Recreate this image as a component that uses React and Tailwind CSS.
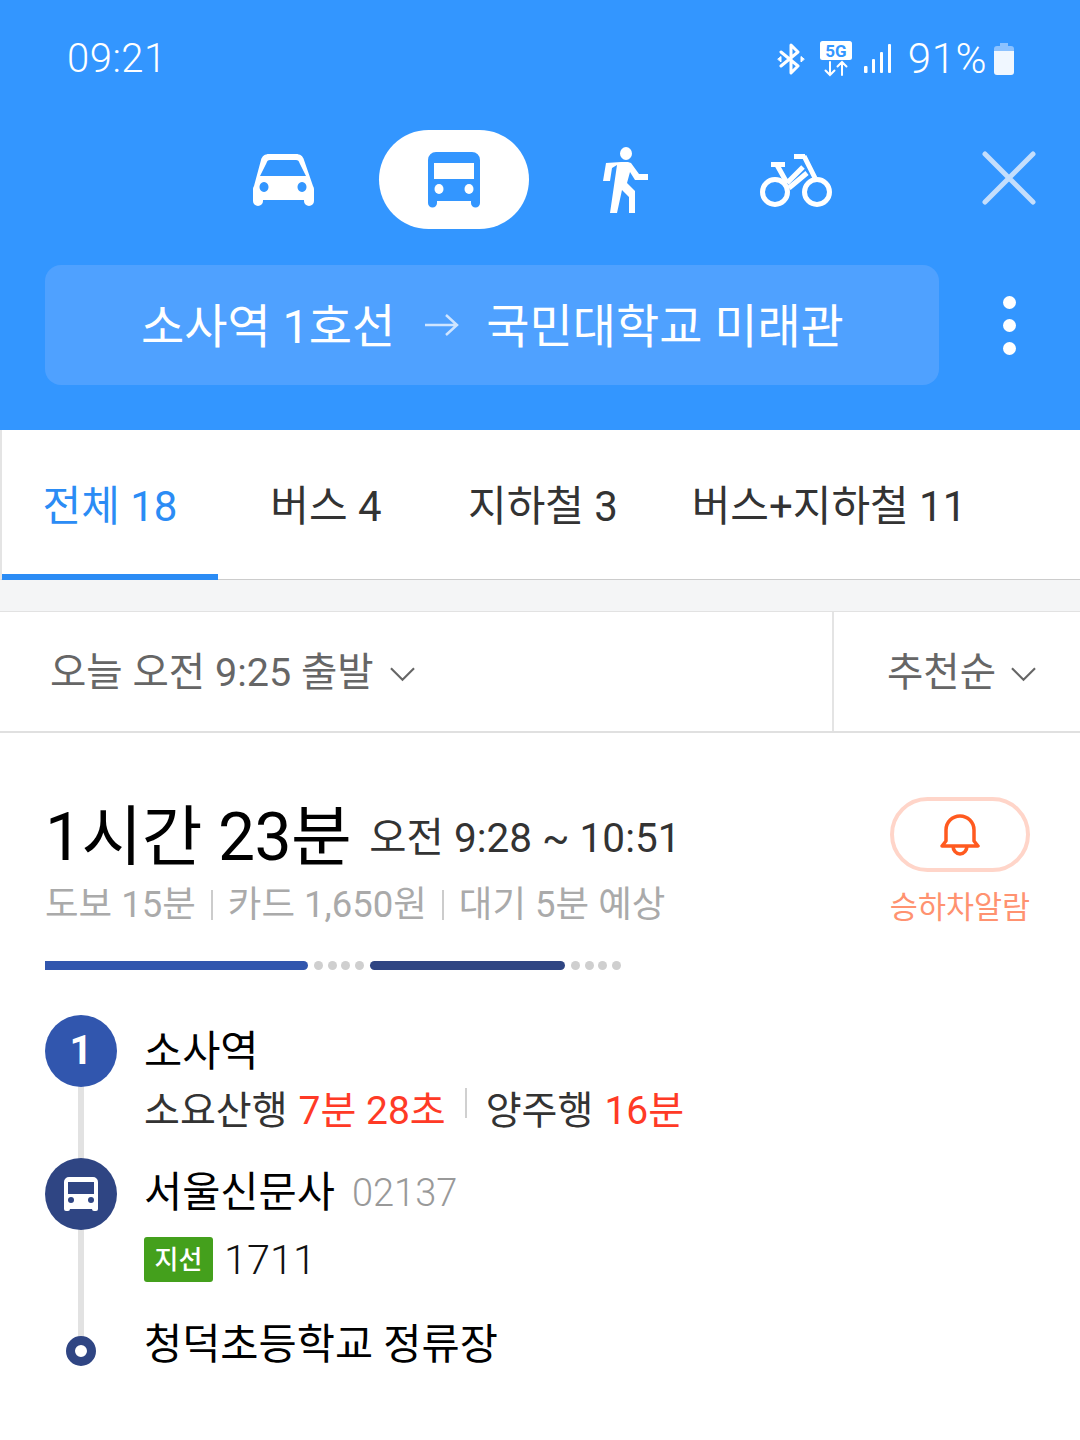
import React from 'react';

const font = { fontFamily: 'Roboto, "Noto Sans CJK KR", sans-serif' };

function BusGlyph({ className, fill = '#fff', cut = '#3396ff' }) {
  return (
    <svg viewBox="0 0 52 56" className={className}>
      <path d="M8 0h36a8 8 0 0 1 8 8v43a4.500 4.500 0 0 1-9 0v-2H9v2a4.500 4.500 0 0 1-9 0V8a8 8 0 0 1 8-8z" fill={fill} />
      <rect x="6" y="11" width="40" height="16" fill={cut} />
      <ellipse cx="11" cy="37" rx="4.500" ry="5" fill={cut} />
      <ellipse cx="41" cy="37" rx="4.500" ry="5" fill={cut} />
    </svg>
  );
}

function Chevron({ className }) {
  return (
    <svg viewBox="0 0 26 16" className={className} fill="none" stroke="#666" strokeWidth="2.200">
      <path d="M1 2l12 12L25 2" />
    </svg>
  );
}

function StatusIcons() {
  return (
    <div className="flex items-center">
      <svg viewBox="0 0 28 32" className="w-[28px] h-[32px] mr-[15px]" fill="none" stroke="#fff" strokeWidth="3" strokeLinejoin="round" strokeLinecap="round">
        <path d="M4 9l17 14-7 7V2l7 7L4 23" />
        <path d="M1 16l3-2.500v5zM27 16l-3-2.500v5z" fill="#fff" strokeWidth="1" />
      </svg>
      <svg viewBox="0 0 32 36" className="w-[32px] h-[36px] mr-[12px]">
        <rect x="0" y="0" width="32" height="19" rx="2.500" fill="#fff" />
        <text x="16" y="16" textAnchor="middle" fontSize="17" fontWeight="700" fill="#3396ff" fontFamily="Roboto">5G</text>
        <path d="M10 21v13M5.500 29.500L10 34l4.500-4.500M22 34V21M17.500 25.500L22 21l4.500 4.500" fill="none" stroke="#fff" strokeWidth="2" strokeLinecap="round" />
      </svg>
      <svg viewBox="0 0 28 30" className="w-[28px] h-[30px] mr-[16px]">
        <rect x="0" y="22" width="3.500" height="7" rx="1" fill="#fff" />
        <rect x="8" y="15" width="3" height="14" rx="1" fill="#fff" />
        <rect x="16" y="8" width="3" height="21" rx="1" fill="#fff" />
        <rect x="24" y="0" width="3" height="29" rx="1" fill="#fff" />
      </svg>
      <span className="text-[42px] leading-none font-light text-white tracking-[0.5px]">91%</span>
      <svg viewBox="0 0 20 32" className="w-[20px] h-[32px] ml-[7px]">
        <path d="M6 0h8v4H6z" fill="#8cc2ff" />
        <rect x="0" y="3" width="20" height="7" rx="3" fill="#8cc2ff" />
        <path d="M0 8h20v21a3 3 0 0 1-3 3H3a3 3 0 0 1-3-3z" fill="#f0f7ff" />
      </svg>
    </div>
  );
}

function TransportTabs() {
  return (
    <div className="flex items-center h-[99px] mt-[50px] relative">
      <div className="w-[252px] shrink-0" />
      <svg viewBox="0 0 62 52" className="w-[62px] h-[52px] shrink-0">
        <path fillRule="evenodd" fill="#fff" d="M17 0h27c4 0 7 2 8 6l9 26c.6 1 1 2 1 3v12a5 5 0 0 1-10 0v-1H11v1a5 5 0 0 1-10 0V35c0-1 .3-2 1-3L9 6c1-4 4-6 8-6zm1 6c-2 0-3 1-3.500 3L8 22h46l-6.500-13c-.5-2-1.500-3-3.500-3zM12 28a4.500 5 0 1 0 .01 0zM50 28a4.500 5 0 1 0 .01 0z" />
      </svg>
      <div className="ml-[65px] w-[150px] h-[99px] bg-white rounded-[50px] flex items-center justify-center shrink-0">
        <BusGlyph className="w-[52px] h-[56px]" fill="#3396ff" cut="#fff" />
      </div>
      <svg viewBox="0 0 46 66" className="ml-[73px] w-[46px] h-[66px] shrink-0" fill="#fff">
        <ellipse cx="24" cy="6.500" rx="6" ry="6.500" />
        <path d="M19 15l7 0 3 1 8 11h9v6H33l-5-8-3 11 8 8v22h-6V50l-7-7-5 23H8l7-48-5 3-2 13H1l3-18z" />
      </svg>
      <svg viewBox="0 0 72 54" className="ml-[112px] w-[72px] h-[54px] shrink-0" fill="none" stroke="#fff" strokeWidth="5">
        <circle cx="15" cy="39" r="12.500" />
        <circle cx="57" cy="39" r="12.500" />
        <path d="M11 11.500h14M17 12l10 18M34 3.500h11M44 3l11 22M27 30l16-16M29 35l18-15" />
      </svg>
      <svg viewBox="0 0 54 54" className="absolute left-[982px] top-[21px] w-[54px] h-[54px]" stroke="#c4defc" strokeWidth="5" strokeLinecap="round">
        <path d="M3 3l48 48M51 3L3 51" />
      </svg>
    </div>
  );
}

function TabItem({ label, active, className }) {
  return (
    <div className={`h-[150px] flex items-center justify-center ${className} ${active ? 'text-[#2b8cf5] border-b-[6px] border-[#2b8cf5] pt-[10px]' : 'text-[#333] pt-[4px]'}`}>
      <span className="text-[42px] leading-none whitespace-nowrap">{label}</span>
    </div>
  );
}

function Timeline() {
  return (
    <div className="relative mt-[45px] ml-[45px]">
      <div className="absolute left-[33px] top-[60px] w-[6px] h-[280px] bg-[#e2e2e2]" />

      <div className="flex h-[143px] relative">
        <div className="w-[72px] h-[72px] rounded-full bg-[#3156ae] flex items-center justify-center text-white text-[40px] font-bold leading-none shrink-0">1</div>
        <div className="ml-[27px] pt-[3px]">
          <div className="text-[41.500px] leading-[68px] text-black">소사역</div>
          <div className="flex items-center text-[39px] leading-[54px] mt-[-2px] text-[#333]">
            <span>소요산행</span>
            <span className="ml-[11px] text-[#ff3a26]">7분 28초</span>
            <span className="w-[2px] h-[30px] bg-[#d0d0d0] ml-[19px] mr-[19px] mt-[-16px]" />
            <span>양주행</span>
            <span className="ml-[11px] text-[#ff3a26]">16분</span>
          </div>
        </div>
      </div>

      <div className="flex h-[150px] relative">
        <div className="w-[72px] h-[72px] rounded-full bg-[#2f4583] flex items-center justify-center shrink-0">
          <svg viewBox="0 0 34 34" className="w-[34px] h-[34px]">
            <path d="M5 0h24a5 5 0 0 1 5 5v27a2 2 0 0 1-2 2h-2a2 2 0 0 1-2-2H6a2 2 0 0 1-2 2H2a2 2 0 0 1-2-2V5a5 5 0 0 1 5-5z" fill="#fff" />
            <rect x="4" y="5" width="26" height="12" fill="#2f4583" />
            <circle cx="7" cy="23" r="3" fill="#2f4583" />
            <circle cx="27" cy="23" r="3" fill="#2f4583" />
          </svg>
        </div>
        <div className="ml-[27px]">
          <div className="flex items-center h-[68px] pt-[1px]">
            <span className="text-[41.500px] text-black leading-none">서울신문사</span>
            <span className="ml-[17px] text-[38px] font-light text-[#999] leading-none">02137</span>
          </div>
          <div className="flex items-center mt-[11px]">
            <span className="w-[69px] h-[45px] rounded-[3px] bg-[#44a01c] text-white text-[26px] font-medium flex items-center justify-center leading-none">지선</span>
            <span className="ml-[11px] text-[41.500px] font-light text-[#111] leading-none">1711</span>
          </div>
        </div>
      </div>

      <div className="flex items-center relative">
        <div className="w-[72px] flex justify-center shrink-0">
          <div className="w-[30px] h-[30px] rounded-full border-[9px] border-[#2f4583] bg-white mt-[14px]" />
        </div>
        <div className="ml-[27px] text-[41.500px] text-black leading-[68px] mt-[3px]">청덕초등학교 정류장</div>
      </div>
    </div>
  );
}

export default function App() {
  return (
    <div className="w-[1080px] h-[1440px] bg-white overflow-hidden" style={font}>
      <header className="h-[430px] bg-[#3396ff] relative">
        <div className="flex items-center justify-between pl-[67px] pr-[66px] pt-[38px] h-[80px]">
          <span className="text-[40px] font-light text-white leading-none tracking-[0.5px]">09:21</span>
          <StatusIcons />
        </div>
        <TransportTabs />
        <div className="flex items-center mt-[36px]">
          <div className="ml-[45px] w-[894px] h-[120px] rounded-[16px] bg-[#4fa1ff] flex items-center pl-[96px] pt-[3px] text-white text-[47px] leading-none">
            <span>소사역 1호선</span>
            <svg viewBox="0 0 34 24" className="w-[34px] h-[24px] ml-[30px] mr-[27px] mt-[-3px]" fill="none" stroke="#cfe5ff" strokeWidth="2.500">
              <path d="M0 12h32M21 2l11 10-11 10" />
            </svg>
            <span>국민대학교 미래관</span>
          </div>
          <div className="ml-[64px] flex flex-col gap-[10px]">
            <div className="w-[13px] h-[13px] rounded-full bg-white" />
            <div className="w-[13px] h-[13px] rounded-full bg-white" />
            <div className="w-[13px] h-[13px] rounded-full bg-white" />
          </div>
        </div>
      </header>

      <nav className="flex h-[150px] border-b border-[#ccc] border-l-2 border-l-[#e4e4e4]">
        <TabItem label="전체 18" active className="w-[216px]" />
        <TabItem label="버스 4" className="w-[216px]" />
        <TabItem label="지하철 3" className="w-[218px]" />
        <TabItem label="버스+지하철 11" className="w-[354px]" />
      </nav>

      <div className="h-[32px] bg-[#f4f5f6] border-b border-[#e2e2e2]" />

      <div className="flex h-[121px] border-b-2 border-[#e0e0e0] text-[#666] text-[39.500px]">
        <div className="w-[834px] border-r-2 border-[#e4e4e4] flex items-center pl-[50px] pt-[3px]">
          <span className="leading-none">오늘 오전 9:25 출발</span>
          <Chevron className="w-[25px] h-[16px] ml-[16px] mt-[2px]" />
        </div>
        <div className="flex-1 flex items-center pl-[53px] pt-[3px]">
          <span className="leading-none">추천순</span>
          <Chevron className="w-[25px] h-[16px] ml-[15px] mt-[2px]" />
        </div>
      </div>

      <section className="relative">
        <div className="pl-[45px] pt-[69px]">
          <div className="flex items-center h-[72px]">
            <span className="text-[66px] leading-none text-black tracking-[-0.5px]">1시간 23분</span>
            <span className="ml-[18px] text-[40.500px] leading-none text-[#333]">오전 9:28 ~ 10:51</span>
          </div>
          <div className="flex items-center mt-[6px] h-[50px] text-[36.500px] text-[#aaa] leading-none">
            <span>도보 15분</span>
            <span className="w-[2px] h-[30px] bg-[#ccc] mx-[15px]" />
            <span>카드 1,650원</span>
            <span className="w-[2px] h-[30px] bg-[#ccc] mx-[15px]" />
            <span>대기 5분 예상</span>
          </div>
          <div className="flex items-center mt-[31px] h-[9px]">
            <div className="w-[263px] h-[9px] rounded-r-full bg-[#3156ae]" />
            <div className="flex gap-[4.500px] ml-[6px] mr-[6.500px]">
              {[0, 1, 2, 3].map(i => <div key={i} className="w-[9px] h-[9px] rounded-full bg-[#cfcfcf]" />)}
            </div>
            <div className="w-[195px] h-[9px] rounded-full bg-[#2f4583]" />
            <div className="flex gap-[4.500px] mx-[6px]">
              {[0, 1, 2, 3].map(i => <div key={i} className="w-[9px] h-[9px] rounded-full bg-[#cfcfcf]" />)}
            </div>
          </div>
        </div>

        <div className="absolute right-[50px] top-[64px] w-[140px] flex flex-col items-center">
          <div className="w-[140px] h-[75px] rounded-full border-[4px] border-[#ffd5c9] flex items-center justify-center">
            <svg viewBox="0 0 40 44" className="w-[40px] h-[44px]" fill="none" stroke="#ff5a1f" strokeWidth="3.500" strokeLinejoin="round">
              <path d="M2 33l4-5V17a14 14 0 0 1 28 0v11l4 5z" />
              <path d="M13 33a7 8 0 0 0 14 0" />
            </svg>
          </div>
          <span className="mt-[21px] text-[30.500px] leading-none text-[#ff9270] whitespace-nowrap">승하차알람</span>
        </div>

        <Timeline />
      </section>
    </div>
  );
}
